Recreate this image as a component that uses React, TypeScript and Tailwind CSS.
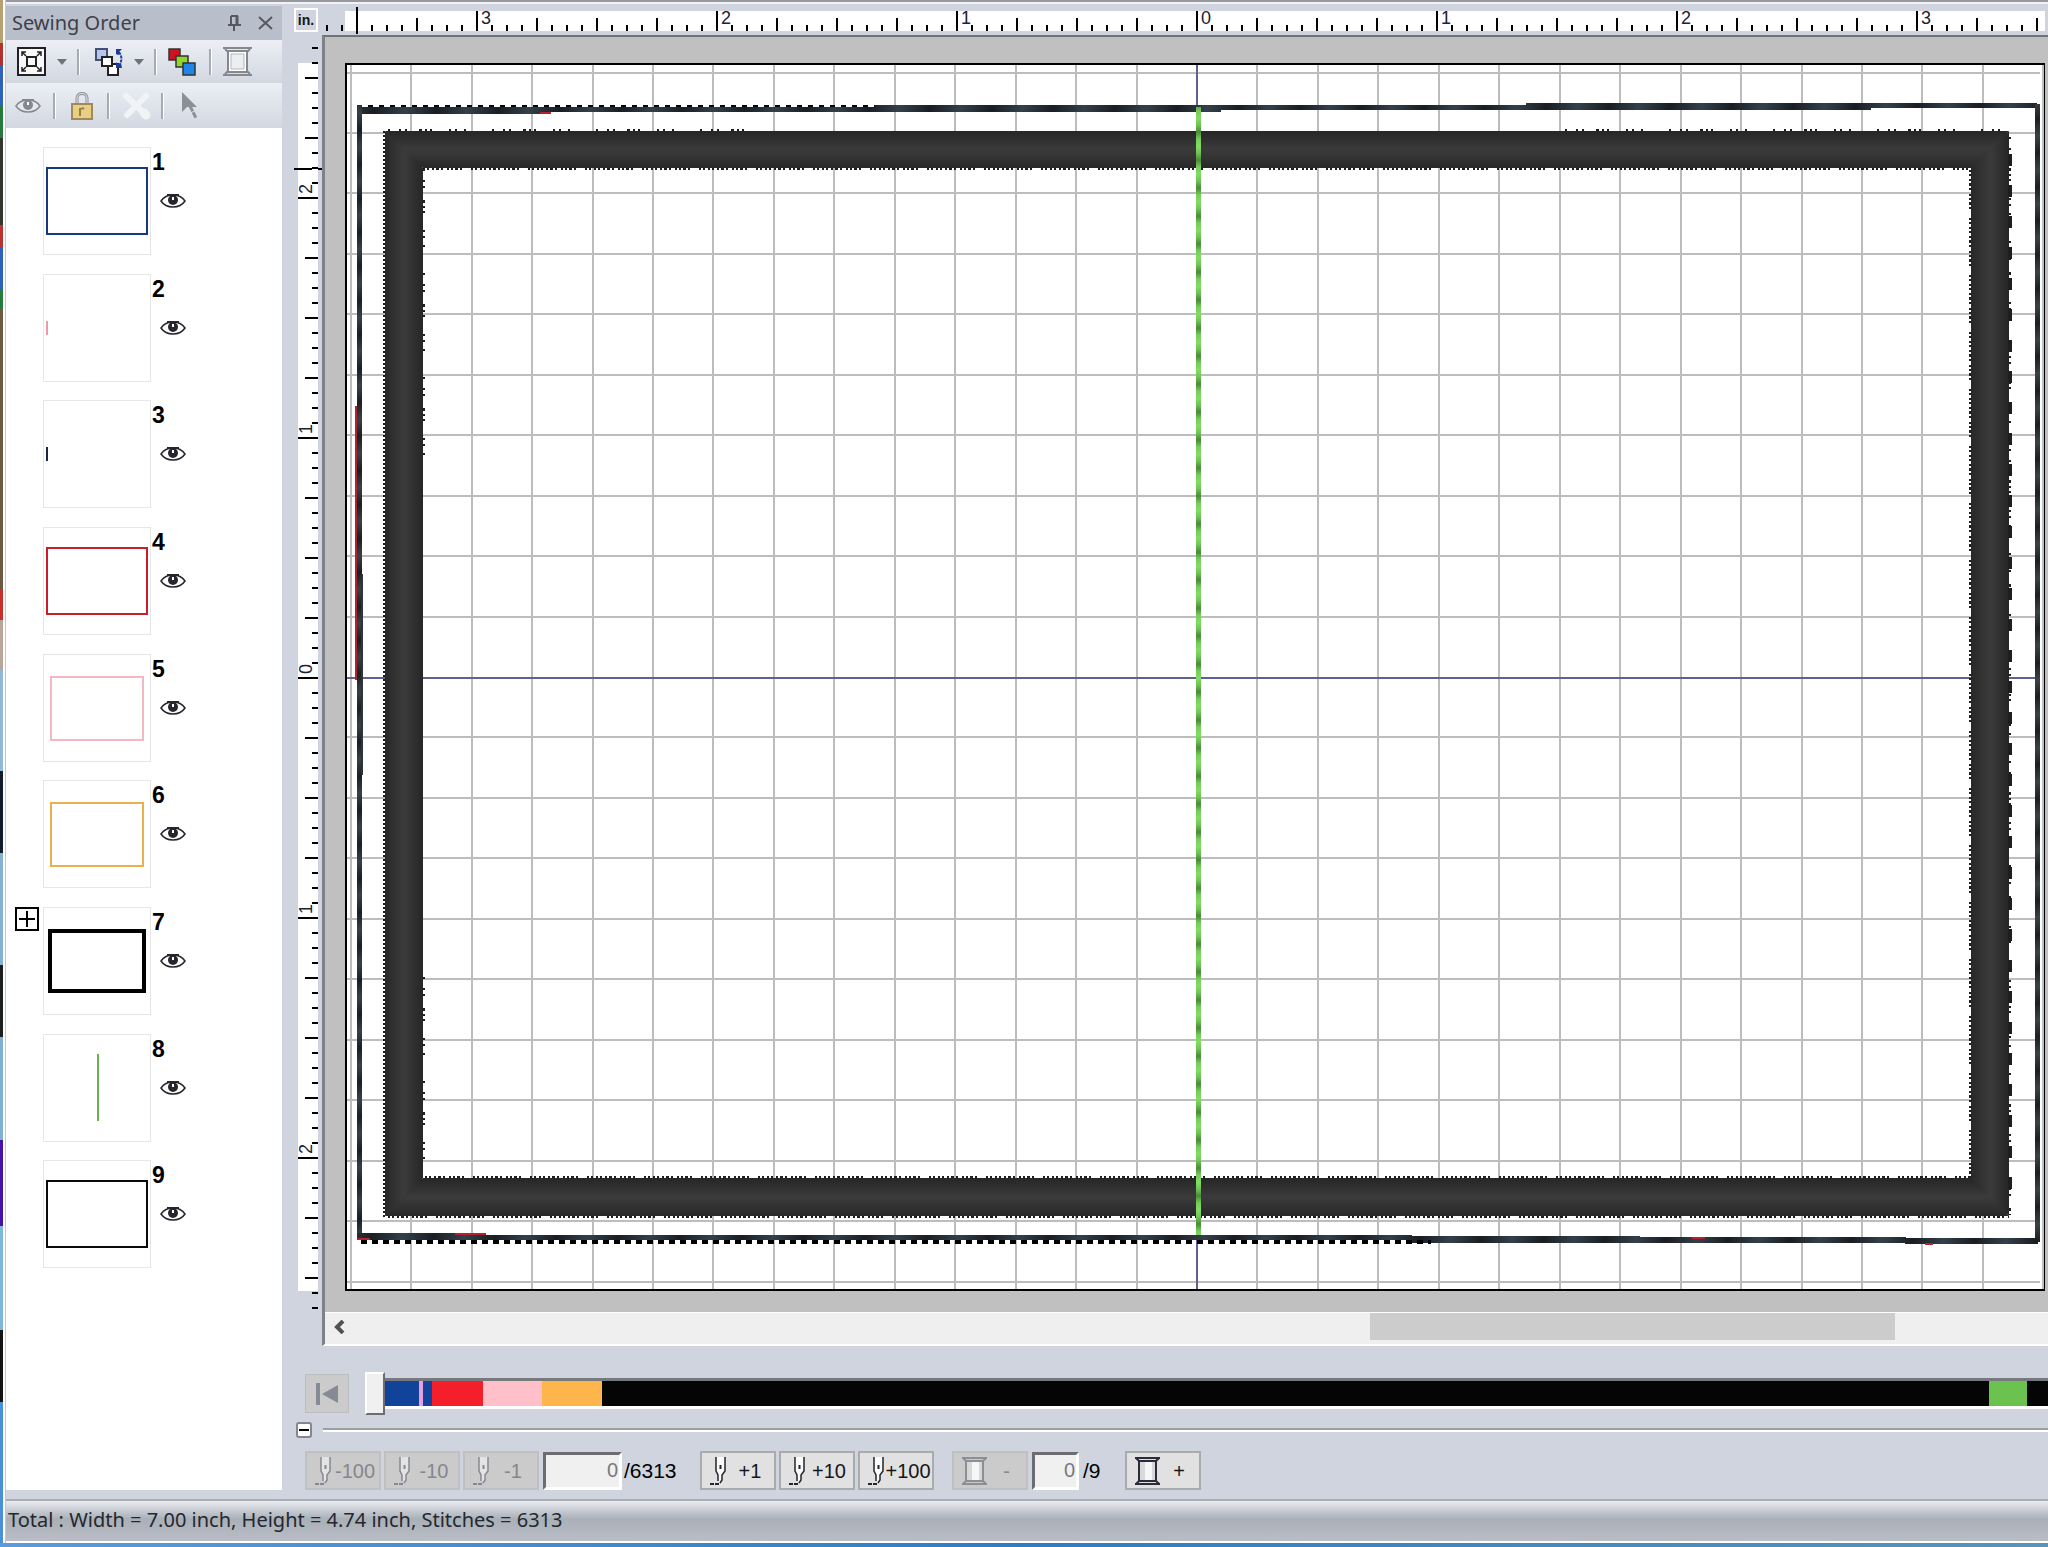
import { useState } from "react";
import type { ReactNode } from "react";

type Thumb = { id: number; label: string; x: number; y: number; w: number; h: number; color: string; stroke: number };

const THUMBS: Thumb[] = [
  { id: 1, label: "Blue frame", x: 3, y: 20, w: 100, h: 66, color: "#173a7c", stroke: 2 },
  { id: 2, label: "Pink tack", x: 3, y: 46, w: 0, h: 14, color: "#ee9aa8", stroke: 2 },
  { id: 3, label: "Navy tack", x: 3, y: 46, w: 0, h: 14, color: "#1c2748", stroke: 2 },
  { id: 4, label: "Red frame", x: 3, y: 20, w: 100, h: 66, color: "#c81e2a", stroke: 2 },
  { id: 5, label: "Pink frame", x: 7, y: 22, w: 92, h: 63, color: "#f2b9c4", stroke: 2 },
  { id: 6, label: "Orange frame", x: 7, y: 22, w: 92, h: 63, color: "#e8b04e", stroke: 2 },
  { id: 7, label: "Black satin frame", x: 6, y: 23, w: 94, h: 60, color: "#000000", stroke: 4 },
  { id: 8, label: "Green line", x: 54, y: 19, w: 0, h: 67, color: "#6cae54", stroke: 2 },
  { id: 9, label: "Black frame", x: 3, y: 20, w: 100, h: 66, color: "#0a0a0a", stroke: 2 },
];

const DESKTOP = [
  { h: 43, c: "#b7a172" },
  { h: 23, c: "#b3302f" },
  { h: 40, c: "#2f62bd" },
  { h: 32, c: "#257a3c" },
  { h: 87, c: "#34352c" },
  { h: 23, c: "#b8342f" },
  { h: 41, c: "#2f62bd" },
  { h: 20, c: "#257a3c" },
  { h: 281, c: "#6d5a45" },
  { h: 30, c: "#c9302c" },
  { h: 50, c: "#b9a59a" },
  { h: 101, c: "#8fb9d6" },
  { h: 82, c: "#121c2c" },
  { h: 112, c: "#86b2d2" },
  { h: 72, c: "#1c1f20" },
  { h: 103, c: "#7fb0d2" },
  { h: 86, c: "#4613a8" },
  { h: 104, c: "#7fb7dc" },
  { h: 72, c: "#141414" },
];

const SEGMENTS = [
  { n: 45, c: "bg-[#11439a]" },
  { n: 4, c: "bg-[#e7a0dd]" },
  { n: 9, c: "bg-[#11439a]" },
  { n: 51, c: "bg-[#f41f2a]" },
  { n: 59, c: "bg-[#ffc0ca]" },
  { n: 60, c: "bg-[#fdb54c]" },
  { n: 1387, c: "bg-[#050505]" },
  { n: 38, c: "bg-[#6cc24f]" },
  { n: 21, c: "bg-[#050505]" },
];

function EyeIcon({ muted = false }: { muted?: boolean }) {
  const c = muted ? "#85888f" : "#26262e";
  return (
    <svg width="26" height="18" viewBox="0 0 26 18" fill="none" aria-hidden="true">
      <path d="M1 9c2-3 6-6 12-6s10 3 12 6c-2 3-6 6-12 6S3 12 1 9z" fill={muted ? "#e6e8ec" : "#fff"} stroke={c} strokeWidth="1.500" />
      <path d="M7 3h12" stroke={c} strokeWidth="2" />
      <circle cx="13" cy="8" r="5" fill={c} />
      <path d="M12 5h2v3h-2z" fill="#fff" />
    </svg>
  );
}

function SpoolIcon({ muted = false }: { muted?: boolean }) {
  const c = muted ? "#8d8f96" : "#2b2c3a";
  return (
    <svg width="25" height="28" viewBox="0 0 25 28" fill="none" aria-hidden="true">
      <path d="M4 4h17v20H4z" fill="#d8d8d8" />
      <path d="M10 4h7v20h-7z" fill="#f6f6f6" />
      <path d="M4 4v20M21 4v20" stroke={c} strokeWidth="2" />
      <path d="M0 1h25M3 4h19M3 24h19M0 27h25M1 1l3 3M24 1l-3 3M1 27l3-3M24 27l-3-3" stroke={c} strokeWidth="2" />
    </svg>
  );
}

function NeedleIcon({ muted = false }: { muted?: boolean }) {
  const c = muted ? "#85898f" : "#20262c";
  return (
    <svg width="16" height="28" viewBox="0 0 16 28" fill="none" aria-hidden="true">
      <path d="M6 0v14l2 4v5l2 2 2-2v-5l3-4V0z" fill={muted ? "#e4e4e4" : "#fafafa"} />
      <path d="M6 0v14l2 4v6M15 0v14l-3 4v5l-2 3" stroke={c} strokeWidth="1.500" />
      <path d="M10.500 8v4" stroke={c} strokeWidth="2" />
      <path d="M0 27h4M5 27h4" stroke={c} strokeWidth="2" />
    </svg>
  );
}

function Caret() {
  return (
    <svg width="10" height="6" viewBox="0 0 10 6" aria-hidden="true">
      <path d="M0 0h10L5 6z" fill="#6e727a" />
    </svg>
  );
}

function Divider() {
  return <div className="h-[26px] w-[3px] border-l-2 border-r border-l-[#a7abb5] border-r-white" />;
}

function Sidebar() {
  return (
    <aside className="flex w-[276px] shrink-0 flex-col pt-[2px] pb-[9px]">
      <div className="flex h-[34px] shrink-0 items-center bg-[#b9bfca] pr-[9px] pl-[6px]">
        <h2 className="flex-1 text-[20px] leading-[28px] text-[#3d414a]">Sewing Order</h2>
        <button type="button" aria-label="Pin panel" className="mr-[17px]">
          <svg width="13" height="16" viewBox="0 0 13 16" fill="none" stroke="#55585f" aria-hidden="true">
            <path d="M3 1h7M3 1v9M0 10h13M6 10v6" strokeWidth="2" />
            <path d="M9 1v9" strokeWidth="3" />
          </svg>
        </button>
        <button type="button" aria-label="Close panel">
          <svg width="15" height="14" viewBox="0 0 15 14" stroke="#55585f" strokeWidth="2" aria-hidden="true">
            <path d="M1 1l13 12M14 1L1 13" />
          </svg>
        </button>
      </div>

      <div className="flex h-[43px] shrink-0 items-center bg-linear-to-b from-[#eceff5] to-[#d3d7e0] pl-[11px]">
        <button type="button" aria-label="Fit view">
          <svg width="29" height="29" viewBox="0 0 29 29" fill="none" stroke="#222" strokeWidth="2" aria-hidden="true">
            <path d="M1 1h27v27H1z" fill="#f8f8f8" />
            <path d="M10 10h9v9h-9z" />
            <path d="M5 9V5h4M20 5h4v4M24 20v4h-4M9 24H5v-4M5 5l4 4M24 5l-4 4M24 24l-4-4M5 24l4-4" strokeWidth="1.500" />
          </svg>
        </button>
        <button type="button" aria-label="Fit view options" className="mr-[10px] ml-[11px]">
          <Caret />
        </button>
        <Divider />
        <button type="button" aria-label="Reorder" className="ml-[15px]">
          <svg width="28" height="28" viewBox="0 0 28 28" fill="none" stroke="#222" strokeWidth="2" aria-hidden="true">
            <path d="M1 1h11v11H1z" fill="#b6c5f0" stroke="#44516e" />
            <path d="M13 16h10v11H13z" fill="#fff" />
            <path d="M7 9h10v9H7z" fill="#fff" />
            <path d="M21 1h6l-3 3 1 2-2 1-2-1zM27 10v4M26 15l1 5h-6v-6l2 2z" fill="#1c3c9c" stroke="none" />
            <path d="M24 4c3 4 3 8 1 12" stroke="#1c3c9c" strokeDasharray="3 1" />
          </svg>
        </button>
        <button type="button" aria-label="Reorder options" className="mr-[10px] ml-[11px]">
          <Caret />
        </button>
        <Divider />
        <button type="button" aria-label="Group by color" className="mr-[13px] ml-[11px]">
          <svg width="28" height="28" viewBox="0 0 28 28" stroke="#333" strokeWidth="1.500" aria-hidden="true">
            <path d="M1 1h11v11H1z" fill="#cc1322" />
            <path d="M8 8h12v11H8z" fill="#8fd926" />
            <path d="M15 15h12v12H15z" fill="#1e86e8" />
          </svg>
        </button>
        <Divider />
        <button type="button" aria-label="Thread spool" className="ml-[11px]">
          <svg width="29" height="29" viewBox="0 0 29 29" fill="none" stroke="#85888f" strokeWidth="2" aria-hidden="true">
            <path d="M5 4h19v21H5z" fill="#fff" />
            <path d="M8 7h13v15H8z" fill="#eceef2" stroke="#b4b7bd" strokeWidth="1" />
            <path d="M0 1h29M0 28h29M2 2l3 3M27 2l-3 3M2 27l3-3M27 27l-3-3" />
          </svg>
        </button>
      </div>

      <div className="flex h-[45px] shrink-0 items-center bg-linear-to-b from-[#eceff5] to-[#d3d7e0] pl-[9px]">
        <button type="button" aria-label="Show" disabled className="mr-[12px]">
          <EyeIcon muted />
        </button>
        <Divider />
        <button type="button" aria-label="Lock" className="mr-[14px] ml-[15px]">
          <svg width="22" height="28" viewBox="0 0 22 28" fill="none" aria-hidden="true">
            <path d="M6 12V6c0-6 10-6 10 0v6" stroke="#8d9099" strokeWidth="3" />
            <path d="M6 12V6c0-6 10-6 10 0v6" stroke="#e8e9ec" strokeWidth="1" />
            <path d="M1 12h20v15H1z" fill="#e9cf84" stroke="#a08a55" strokeWidth="2" />
            <path d="M9 16v8M9 18c1-2 3-2 4-1" stroke="#96804a" strokeWidth="2" />
          </svg>
        </button>
        <Divider />
        <button type="button" aria-label="Delete" disabled className="mr-[10px] ml-[12px]">
          <svg width="29" height="28" viewBox="0 0 29 28" stroke="#f1f3f7" strokeLinecap="round" aria-hidden="true">
            <path d="M4 4l20 19" strokeWidth="6" />
            <path d="M24 4L5 23" strokeWidth="6" />
            <path d="M22 21l2 2" strokeWidth="9" />
          </svg>
        </button>
        <Divider />
        <button type="button" aria-label="Select" disabled className="ml-[17px]">
          <svg width="17" height="27" viewBox="0 0 17 27" aria-hidden="true">
            <path d="M1 0l15 15h-6l-4 0-5 5z" fill="#8b8f97" />
            <path d="M9 14l6 12" stroke="#8b8f97" strokeWidth="3" strokeDasharray="6 1" />
          </svg>
        </button>
      </div>

      <div className="flex-1 bg-white pt-[19px]">
        <ol className="grid h-[1140px] grid-rows-9">
          {THUMBS.map((t) => (
            <li key={t.id} className="flex items-start">
              <div className="flex w-[37px] justify-end pr-[4px]">
                {t.id === 7 && (
                  <button type="button" aria-label="Expand item 7">
                    <svg width="24" height="24" viewBox="0 0 24 24" fill="none" stroke="#000" strokeWidth="2" aria-hidden="true">
                      <path d="M1 1h22v22H1zM4 12h16M12 4v16" />
                    </svg>
                  </button>
                )}
              </div>
              <svg width="108" height="108" viewBox="-1 -1 108 108" fill="none" role="img" aria-label={t.label}>
                <rect x="-0.5" y="-0.5" width="107" height="107" stroke="#e6e6e6" />
                {t.w === 0 ? (
                  <path d={`M${t.x} ${t.y}v${t.h}`} stroke={t.color} strokeWidth={t.stroke} />
                ) : (
                  <rect x={t.x} y={t.y} width={t.w} height={t.h} stroke={t.color} strokeWidth={t.stroke} />
                )}
              </svg>
              <div className="flex flex-col items-start pt-[2px] pl-[1px]">
                <span className="font-['Liberation_Sans'] text-[23px] leading-[26px] font-bold text-black">{t.id}</span>
                <button type="button" aria-label={`Toggle item ${t.id}`} className="mt-[17px] ml-[8px]">
                  <EyeIcon />
                </button>
              </div>
            </li>
          ))}
        </ol>
      </div>
    </aside>
  );
}

// Sixteenth-of-an-inch ticks, numbered from the middle outwards
function ticks(zero: number, from: number, to: number) {
  const out: { i: number; pos: number }[] = [];
  for (let i = -60; i <= 60; i++) {
    const pos = zero + i * 15;
    if (pos >= from && pos <= to) out.push({ i, pos });
  }
  return out;
}

function TopRuler() {
  return (
    <svg className="h-[31px] min-w-0 flex-1" aria-hidden="true">
      <rect x="23" y="7" width="1700" height="20" fill="#fff" />
      {ticks(875, 5, 1722).map(({ i, pos }) => {
        const top = i % 16 === 0 ? 7 : i % 4 === 0 ? 14 : 21;
        return <rect key={i} x={pos - 1} y={top} width="2" height={27 - top} fill="#000" />;
      })}
      <path d="M35 3v11M35 27v3" stroke="#000" strokeWidth="2" />
      {[-3, -2, -1, 0, 1, 2, 3].map((n) => (
        <text key={n} x={879 + n * 240} y="20" className="fill-[#1c2233] font-['Liberation_Sans'] text-[18px]">
          {Math.abs(n)}
        </text>
      ))}
    </svg>
  );
}

function LeftRuler() {
  return (
    <svg className="h-full w-[40px] shrink-0" aria-hidden="true">
      <rect x="16" y="28" width="20" height="1228" fill="#fff" />
      {ticks(643, 10, 1275).map(({ i, pos }) => {
        const left = i % 16 === 0 ? 16 : i % 4 === 0 ? 23 : 30;
        return <rect key={i} x={left} y={pos - 1} width={36 - left} height="2" fill="#000" />;
      })}
      <path d="M12 134h18M36 134h4" stroke="#000" strokeWidth="2" />
      {[-2, -1, 0, 1, 2].map((n) => (
        <text
          key={n}
          transform={`translate(30 ${639 + n * 240}) rotate(-90)`}
          className="fill-[#1c2233] font-['Liberation_Sans'] text-[18px]"
        >
          {Math.abs(n)}
        </text>
      ))}
    </svg>
  );
}

const RAGGED = "2 2 2 3 2 2 3 2 2 4 2 2 2 2 3 2 2 9 2 2 2 3";
const SPARSE = "2 9 2 4 2 12 3 3 2 3 2 17 2 4 2 7 2 26";

// Origin is the top left corner of the grey work area
function Canvas() {
  const lines = Array.from({ length: 29 }, (_, i) => i - 14).filter((i) => i !== 0);
  return (
    <svg className="w-full flex-1" role="img" aria-label="Embroidery design">
      <defs>
        <linearGradient id="satinV" x1="0" y1="0" x2="0" y2="1">
          <stop offset="0" stopColor="#262626" />
          <stop offset="0.5" stopColor="#3b3b3b" />
          <stop offset="1" stopColor="#282828" />
        </linearGradient>
        <linearGradient id="satinH" x1="0" y1="0" x2="1" y2="0">
          <stop offset="0" stopColor="#282828" />
          <stop offset="0.5" stopColor="#3b3b3b" />
          <stop offset="1" stopColor="#262626" />
        </linearGradient>
        <linearGradient id="green" gradientUnits="userSpaceOnUse" x1="0" y1="67" x2="0" y2="95" spreadMethod="repeat">
          <stop offset="0" stopColor="#4b8a38" />
          <stop offset="0.25" stopColor="#74cc5a" />
          <stop offset="0.5" stopColor="#82dd66" />
          <stop offset="0.75" stopColor="#6fc455" />
          <stop offset="1" stopColor="#4b8a38" />
        </linearGradient>
        <linearGradient id="threadH" gradientUnits="userSpaceOnUse" x1="0" y1="0" x2="30" y2="5" spreadMethod="reflect">
          <stop offset="0" stopColor="#1a1e23" />
          <stop offset="1" stopColor="#33404b" />
        </linearGradient>
        <linearGradient id="threadV" gradientUnits="userSpaceOnUse" x1="0" y1="0" x2="4" y2="16" spreadMethod="reflect">
          <stop offset="0" stopColor="#1c1f21" />
          <stop offset="1" stopColor="#3a4144" />
        </linearGradient>
      </defs>

      <rect x="20" y="26" width="1700" height="1228" fill="#000" />
      <rect x="22" y="28" width="1696" height="1224" fill="#fff" />

      {lines.map((i) => (
        <path key={`v${i}`} d={`M${Math.round(872 + i * 60.45)} 28v1224`} stroke="#bdbdbd" strokeWidth="2" />
      ))}
      {lines
        .filter((i) => Math.abs(i) <= 10)
        .map((i) => (
          <path key={`h${i}`} d={`M22 ${Math.round(640 + i * 60.45)}h1693`} stroke="#bdbdbd" strokeWidth="2" />
        ))}
      <path d="M872 28v1224M22 641h1693" stroke="#5f6190" strokeWidth="2" />

      {/* Running stitch outline */}
      <path d="M32 70h194v7H32zM226 70h324v5H226zM550 68h346v7H550zM896 68h305v5H896zM1201 66h345v7h-345zM1546 66h166v5h-166z" fill="url(#threadH)" />
      <path d="M32 69h518" stroke="#05070c" strokeWidth="2" strokeDasharray="5 6" />
      <path d="M32 68h5v1133h-5z" fill="url(#threadV)" />
      <path d="M1710 67h5v1138h-5z" fill="url(#threadV)" />
      <path d="M32 1196h129v7H32zM161 1198h926v5H161zM1087 1199h228v7h-228zM1315 1200h266v6h-266zM1580 1201h133v6h-133z" fill="url(#threadH)" />
      <path d="M36 1205h1070" stroke="#000" strokeWidth="4" strokeDasharray="6 5" />
      <path d="M31 369v274M215 76h11M32 1202h13M130 1197h31M1367 1201h13M1600 1207h8" stroke="#b5222c" strokeWidth="2" />
      <path d="M37 537v201" stroke="#2b3540" strokeWidth="2" />

      {/* Satin frame */}
      <path d="M79 112H1664V1160H79z" fill="none" stroke="#303030" strokeWidth="36" />
      <path d="M60 94H1684L1646 131H98z" fill="url(#satinV)" />
      <path d="M60 1179H1684L1646 1141H98z" fill="url(#satinV)" />
      <path d="M60 94L98 131V1141L60 1179z" fill="url(#satinH)" />
      <path d="M1684 94L1646 131V1141L1684 1179z" fill="url(#satinH)" />
      <g fill="none" stroke="#1e1e1e" strokeWidth="2">
        <path d="M59 94V1180" strokeDasharray="2 2" />
        <path d="M63 93H420M1240 93H1682" strokeDasharray={SPARSE} />
        <path d="M98 132H1645M1645 133V1141M63 1180H1684M100 1140H1645" strokeDasharray={RAGGED} />
        <path d="M99 132V426M99 940V1140M1685 100V1178" strokeDasharray={SPARSE} />
        <path d="M1685 117V1165" strokeWidth="4" strokeDasharray="12 19" />
      </g>

      <path d="M871 70h5v1128h-5z" fill="url(#green)" />
    </svg>
  );
}

function StepButton({ icon, children, disabled = false }: { icon: ReactNode; children: ReactNode; disabled?: boolean }) {
  return (
    <button
      type="button"
      disabled={disabled}
      className={`flex h-[39px] w-[76px] shrink-0 items-center border-2 pl-[8px] text-[20px] leading-none ${
        disabled ? "border-[#bfc0c2] bg-[#cbcbcb] text-[#85878c]" : "border-[#a9abae] bg-[#e1e1e1] text-[#14161c]"
      }`}
    >
      {icon}
      <span className="flex-1 text-center">{children}</span>
    </button>
  );
}

function Field({ label, value, onChange, wide = false }: { label: string; value: string; onChange: (v: string) => void; wide?: boolean }) {
  return (
    <input
      type="text"
      aria-label={label}
      value={value}
      onChange={(e) => onChange(e.target.value)}
      className={`h-[38px] shrink-0 border-3 border-t-[#6b6d72] border-r-white border-b-white border-l-[#6b6d72] bg-[#f0f0f0] pr-[1px] text-right text-[20px] text-[#77797e] ${
        wide ? "w-[79px]" : "w-[47px]"
      }`}
    />
  );
}

function Simulator() {
  const [stitch, setStitch] = useState("0");
  const [color, setColor] = useState("0");

  return (
    <div className="font-['Liberation_Sans',Arial,sans-serif]">
      <div className="flex items-center pt-[26px] pl-[23px]">
        <button type="button" aria-label="Back to start" disabled className="flex h-[39px] w-[44px] shrink-0 items-center justify-center border border-[#bcbdc0] bg-[#cbcbcb]">
          <svg width="22" height="22" viewBox="0 0 22 22" fill="#878994" aria-hidden="true">
            <path d="M0 0h4v22H0zM6 11L22 2v18z" />
          </svg>
        </button>
        <div className="relative ml-[16px] flex h-[43px] min-w-0 flex-1 items-center overflow-hidden">
          <div className="ml-[9px] flex h-[31px] min-w-0 flex-1 border-t-3 border-b-3 border-t-[#77797e] border-b-white">
            {SEGMENTS.map((s, i) => (
              <div key={i} className={s.c} style={{ flexGrow: s.n, flexBasis: 0 }} />
            ))}
          </div>
          <input
            type="range"
            aria-label="Stitch position"
            min={0}
            max={6313}
            value={Number(stitch) || 0}
            onChange={(e) => setStitch(e.target.value)}
            className="absolute inset-0 h-[43px] w-full appearance-none bg-transparent [&::-webkit-slider-thumb]:h-[43px] [&::-webkit-slider-thumb]:w-[20px] [&::-webkit-slider-thumb]:appearance-none [&::-webkit-slider-thumb]:border-2 [&::-webkit-slider-thumb]:border-t-white [&::-webkit-slider-thumb]:border-r-[#6b6d72] [&::-webkit-slider-thumb]:border-b-[#6b6d72] [&::-webkit-slider-thumb]:border-l-white [&::-webkit-slider-thumb]:bg-[#f0f0f0]"
          />
        </div>
      </div>

      <div className="flex items-center pt-[7px] pl-[14px]">
        <button type="button" aria-label="Collapse controls" className="flex h-[16px] w-[16px] items-center justify-center rounded-[3px] border-2 border-[#85878f] bg-white">
          <span className="h-[2px] w-[10px] bg-black" />
        </button>
        <div className="ml-[11px] h-[4px] flex-1 border-t-2 border-b-2 border-t-[#9c9ea2] border-b-white" />
      </div>

      <div className="flex items-center pt-[13px] pb-[9px] pl-[23px]">
        <div className="flex gap-[3px]">
          <StepButton disabled icon={<NeedleIcon muted />}>-100</StepButton>
          <StepButton disabled icon={<NeedleIcon muted />}>-10</StepButton>
          <StepButton disabled icon={<NeedleIcon muted />}>-1</StepButton>
        </div>
        <div className="ml-[4px] flex w-[157px] items-center gap-[2px] text-[21px]">
          <Field wide label="Current stitch" value={stitch} onChange={setStitch} />
          <span>/6313</span>
        </div>
        <div className="flex gap-[3px]">
          <StepButton icon={<NeedleIcon />}>+1</StepButton>
          <StepButton icon={<NeedleIcon />}>+10</StepButton>
          <StepButton icon={<NeedleIcon />}>+100</StepButton>
        </div>
        <div className="ml-[18px] flex items-center gap-[4px] text-[21px]">
          <StepButton disabled icon={<SpoolIcon muted />}>-</StepButton>
          <Field label="Current color" value={color} onChange={setColor} />
          <span>/9</span>
        </div>
        <div className="ml-[24px]">
          <StepButton icon={<SpoolIcon />}>+</StepButton>
        </div>
      </div>
    </div>
  );
}

export default function App() {
  return (
    <div className="flex min-h-screen flex-col overflow-hidden bg-[#cfd4de] font-['Noto_Sans','Open_Sans',sans-serif]">
      <div className="flex flex-1">
        {/* Strip of desktop showing beside the window */}
        <div className="flex w-[3px] shrink-0 flex-col bg-[#4a90d9]">
          {DESKTOP.map((d, i) => (
            <div key={i} className="shrink-0" style={{ height: d.h, backgroundColor: d.c }} />
          ))}
        </div>
        <div className="w-[3px] shrink-0 border-r border-l-2 border-r-[#c3c7d0] border-l-white" />

        <div className="flex min-w-0 flex-1 flex-col">
          <div className="h-[4px] shrink-0 border-t-2 border-b-2 border-t-[#97999f] border-b-[#f0f2f6]" />
          <div className="flex flex-1">
            <Sidebar />

            <main className="flex min-w-0 flex-1 flex-col">
              <div className="flex">
                <div className="w-[40px] shrink-0 pt-[3px] pl-[12px]">
                  <button type="button" className="h-[24px] w-[24px] border-2 border-white font-['Liberation_Sans'] text-[14px] leading-[20px] font-bold text-[#14161c]">
                    in.
                  </button>
                </div>
                <TopRuler />
              </div>

              <div className="flex flex-1">
                <LeftRuler />
                <div className="flex min-w-0 flex-1 flex-col border-t-2 border-b-2 border-l-3 border-t-[#6f7276] border-b-white border-l-[#7c8288] bg-[#c0c0c0]">
                  <Canvas />
                  <div className="flex h-[32px] shrink-0 items-start border-t border-white bg-[#efefef]">
                    <button type="button" aria-label="Scroll left" className="flex h-[28px] w-[28px] shrink-0 items-center justify-center">
                      <svg width="12" height="14" viewBox="0 0 12 14" fill="none" stroke="#4f5154" strokeWidth="4" aria-hidden="true">
                        <path d="M10 1L4 7l6 6" />
                      </svg>
                    </button>
                    <div className="flex h-[27px] flex-1">
                      <div className="w-[60%]" />
                      <div className="w-[31%] bg-[#cccccc]" />
                    </div>
                  </div>
                </div>
              </div>

              <Simulator />
            </main>
          </div>

          <footer className="h-[42px] shrink-0 border-t-2 border-[#a9adb5] bg-linear-to-b from-[#eaecf1] via-[#aab0b8] via-45% to-[#b9bdc5] pl-[2px] text-[20px] leading-[38px] text-[#24272f]">
            Total : Width = 7.00 inch, Height = 4.74 inch, Stitches = 6313
          </footer>
          <div className="h-[2px] shrink-0 bg-white" />
        </div>
      </div>
      <div className="h-[4px] shrink-0 bg-linear-to-r from-[#5c9bd8] via-[#2f7cc4] to-[#5b93b8]" />
    </div>
  );
}
